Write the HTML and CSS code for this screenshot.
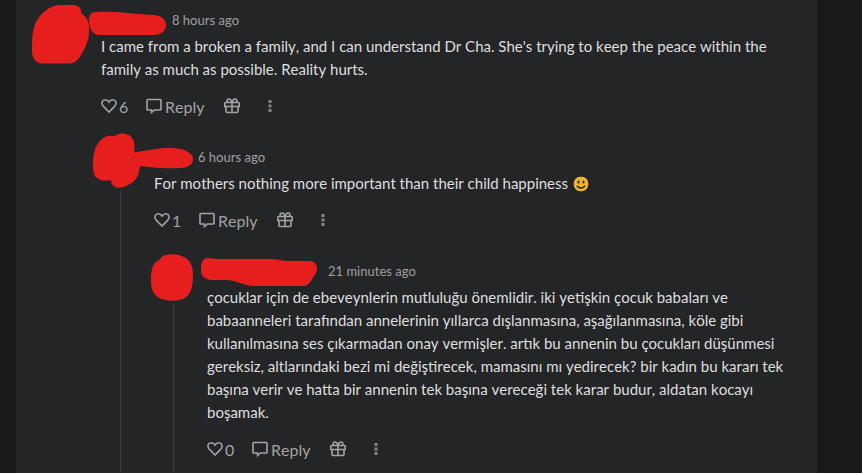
FILE: index.html
```
<!DOCTYPE html>
<html lang="en">
<head>
  <meta charset="UTF-8">
  <meta name="viewport" content="width=device-width, initial-scale=1.0">
  <title>Comments</title>
  <link rel="stylesheet" href="styles.css">
</head>
<body>
  <!-- shared icons -->
  <svg class="sprite" aria-hidden="true">
    <symbol id="heart" viewBox="0 0 16 16">
      <path d="M8 14 L2.2 8.1 C-.3 5.2 1.2 1.7 4.3 1.7 C6 1.7 7.2 2.6 8 4 C8.800 2.600 10 1.700 11.700 1.700 C14.800 1.700 16.300 5.200 13.800 8.100 Z"/>
    </symbol>
    <symbol id="bubble" viewBox="0 0 16 16">
      <path d="M1.800 1.500 H14.200 Q15 1.500 15 2.300 V11.200 Q15 12 14.200 12 H8.500 L5.500 14.500 V12 H1.800 Q1 12 1 11.200 V2.300 Q1 1.500 1.800 1.500 Z"/>
    </symbol>
    <symbol id="gift" viewBox="0 0 16 16">
      <path d="M1.500 4.500 H14.500 Q15.200 4.500 15.200 5.200 V8.500 H.8 V5.200 Q.8 4.500 1.500 4.500 Z M2 8.500 V13.500 Q2 14.500 3 14.500 H13 Q14 14.500 14 13.500 V8.500 M8 4.500 V14.500 M8 4.500 C7.500 2 6.200 1 4.800 1 C2.800 1 2.500 3.500 4 4.500 M8 4.500 C8.500 2 9.800 1 11.200 1 C13.200 1 13.500 3.500 12 4.500"/>
    </symbol>
    <symbol id="dots" viewBox="0 0 4 16">
      <path class="dot" d="M.5 2 H3.500 V5 H.5 Z M.5 6.500 H3.500 V9.500 H.5 Z M.5 11 H3.500 V14 H.5 Z"/>
    </symbol>
  </svg>

  <main class="comments">
    <article class="comment">
      <div class="side">
        <svg class="avatar" viewBox="0 0 40 40" aria-hidden="true">
          <path d="M12 0 H25 C30 0 34 3 33 8 C40 12 42 20 41 29 C40 38 36 46 31 53 C28 57 25 58.500 21 58.500 H-6 C-12 58.500 -16 53 -16 46 C-16 32 -16 20 -8 11 C-3 5 4 0 12 0 Z"/>
        </svg>
      </div>
      <div class="body">
        <header class="meta">
          <svg class="name" width="60" height="30" aria-hidden="true">
            <path d="M-6 7 C14 6 24 8 38 9 L53 10 C61 11 65 15 65 20 C65 26 60 30 53 30 H-2 C-8 30 -12 23 -12 16 C-12 10 -10 7 -6 7 Z"/>
          </svg>
          <time>8 hours ago</time>
        </header>
        <p class="text">I came from a broken a family, and I can understand Dr Cha. She's trying to keep the peace within the family as much as possible. Reality hurts.</p>
        <div class="actions">
          <button class="like" type="button" aria-label="Like"><svg class="icon"><use href="#heart"/></svg><span>6</span></button>
          <button class="reply" type="button"><svg class="icon"><use href="#bubble"/></svg><span>Reply</span></button>
          <button class="gift" type="button" aria-label="Gift"><svg class="icon"><use href="#gift"/></svg></button>
          <button class="more" type="button" aria-label="More"><svg class="icon-dots"><use href="#dots"/></svg></button>
        </div>

        <article class="comment">
          <div class="side">
            <svg class="avatar" viewBox="0 0 40 40" aria-hidden="true">
              <path d="M4 -5 C8 -7 12 -6 14 -6 C18 -10 28 -9 31 -4 C34 0 34 5 33 10 C39 14 40 20 39 24 C38 35 34 40 27 43 C22 46 16 47 13 44 C11 43 10 41 10 38 C6 39 1 39 -2 37 C-8 35 -8 28 -8 22 C-8 8 -4 -1 4 -5 Z"/>
            </svg>
            <span class="line"></span>
          </div>
          <div class="body">
            <header class="meta">
              <svg class="name" width="33" height="30" aria-hidden="true">
                <path d="M-24 11 C-6 9 6 5 20 6 C31 7 39 11 39 17 C39 23 34 26 26 26 C8 27 -4 25 -24 23 Z"/>
              </svg>
              <time>6 hours ago</time>
            </header>
            <p class="text">For mothers nothing more important than their child happiness
              <svg class="smile" viewBox="0 0 18 18" role="img" aria-label="smile">
                <circle class="face" cx="9" cy="9" r="8"/>
                <ellipse class="eye" cx="6.500" cy="7" rx="1" ry="1.500"/>
                <ellipse class="eye" cx="11.500" cy="7" rx="1" ry="1.500"/>
                <path class="mouth" d="M4.800 11 Q9 15 13.200 11"/>
              </svg></p>
            <div class="actions">
              <button class="like" type="button" aria-label="Like"><svg class="icon"><use href="#heart"/></svg><span>1</span></button>
              <button class="reply" type="button"><svg class="icon"><use href="#bubble"/></svg><span>Reply</span></button>
              <button class="gift" type="button" aria-label="Gift"><svg class="icon"><use href="#gift"/></svg></button>
              <button class="more" type="button" aria-label="More"><svg class="icon-dots"><use href="#dots"/></svg></button>
            </div>

            <article class="comment">
              <div class="side">
                <svg class="avatar" viewBox="0 0 40 40" aria-hidden="true">
                  <path d="M9 0 C16 -3 25 -2 30 1 C37 5 39 11 39 19 C39 31 37 37 32 41 C26 46 11 46 4 41 C-2 37 -3 31 -3 24 C-3 16 -2 7 4 5 C6 4 7 1 9 0 Z"/>
                </svg>
                <span class="line"></span>
              </div>
              <div class="body">
                <header class="meta">
                  <svg class="name" width="110" height="30" aria-hidden="true">
                    <path d="M1 2 C4 2 6 3 10 3 H65 L80 5 H103 C108 5 110 9 110 13 C110 17 106 21 104 25 C101 29 99 30 95 30 H47 C38 30 31 25 20 24 H4 C-3 23 -6 20 -6 14 C-6 6 -4 2 1 2 Z"/>
                  </svg>
                  <time>21 minutes ago</time>
                </header>
                <p class="text" lang="tr">çocuklar için de ebeveynlerin mutluluğu önemlidir. iki yetişkin çocuk babaları ve babaanneleri tarafından annelerinin yıllarca dışlanmasına, aşağılanmasına, köle gibi kullanılmasına ses çıkarmadan onay vermişler. artık bu annenin bu çocukları düşünmesi gereksiz, altlarındaki bezi mi değiştirecek, mamasını mı yedirecek? bir kadın bu kararı tek başına verir ve hatta bir annenin tek başına vereceği tek karar budur, aldatan kocayı boşamak.</p>
                <div class="actions">
                  <button class="like" type="button" aria-label="Like"><svg class="icon"><use href="#heart"/></svg><span>0</span></button>
                  <button class="reply" type="button"><svg class="icon"><use href="#bubble"/></svg><span>Reply</span></button>
                  <button class="gift" type="button" aria-label="Gift"><svg class="icon"><use href="#gift"/></svg></button>
                  <button class="more" type="button" aria-label="More"><svg class="icon-dots"><use href="#dots"/></svg></button>
                </div>
              </div>
            </article>
          </div>
        </article>
      </div>
    </article>
  </main>
</body>
</html>
```
FILE: styles.css
```
* {
  box-sizing: border-box;
}

body {
  margin: 0;
  background: #18191b;
  color: #dfdfdf;
  font-family: Lato, "Liberation Sans", sans-serif;
  font-size: 15px;
  font-kerning: none;
}

.sprite {
  display: none;
}

.comments {
  display: flex;
  flex-direction: column;
  min-height: 100vh;
  margin: 0 45px 0 16px;
  padding: 5px 16px 0 32px;
  background: #242527;
}

.comment {
  display: flex;
  flex: 1 0 auto;
  gap: 13px;
}

/* left column: avatar with the thread line under it */
.side {
  display: flex;
  flex-direction: column;
  flex: 0 0 40px;
}

.avatar {
  width: 40px;
  height: 40px;
  overflow: visible;
  fill: #e71e1e;
}

.line {
  flex: 1;
  width: 1px;
  margin: 8px 0 0 19px;
  background: #3a3b3d;
}

.body {
  display: flex;
  flex-direction: column;
  flex: 1;
  min-width: 0;
}

.meta {
  display: flex;
  align-items: center;
  gap: 11px;
  height: 30px;
  color: #a0a0a0;
  font-size: 13px;
}

.name {
  overflow: visible;
  fill: #e71e1e;
}

.text {
  margin: 0;
  line-height: 23px;
}

.smile {
  width: 18px;
  height: 18px;
  vertical-align: -4px;
}

.face {
  fill: #e9b434;
  stroke: #17181a;
}

.eye {
  fill: #2b2410;
}

.mouth {
  fill: none;
  stroke: #2b2410;
  stroke-width: 1.2;
}

.actions {
  display: flex;
  align-items: center;
  height: 24px;
  margin-top: 13px;
}

.actions button {
  display: flex;
  align-items: center;
  gap: 3px;
  padding: 0;
  border: 0;
  background: none;
  color: #a3a3a3;
  font: inherit;
  font-size: 16px;
  cursor: pointer;
}

.actions .like {
  gap: 2px;
  width: 45px;
}

.actions .reply {
  width: 78px;
}

.actions .gift {
  width: 44px;
}

.icon {
  width: 16px;
  height: 16px;
  fill: none;
  stroke: #a3a3a3;
  stroke-width: 1.6;
}

.icon-dots {
  width: 4px;
  height: 16px;
}

.dot {
  fill: #858585;
}

/* replies */
.body .comment {
  margin-top: 24px;
}
```
